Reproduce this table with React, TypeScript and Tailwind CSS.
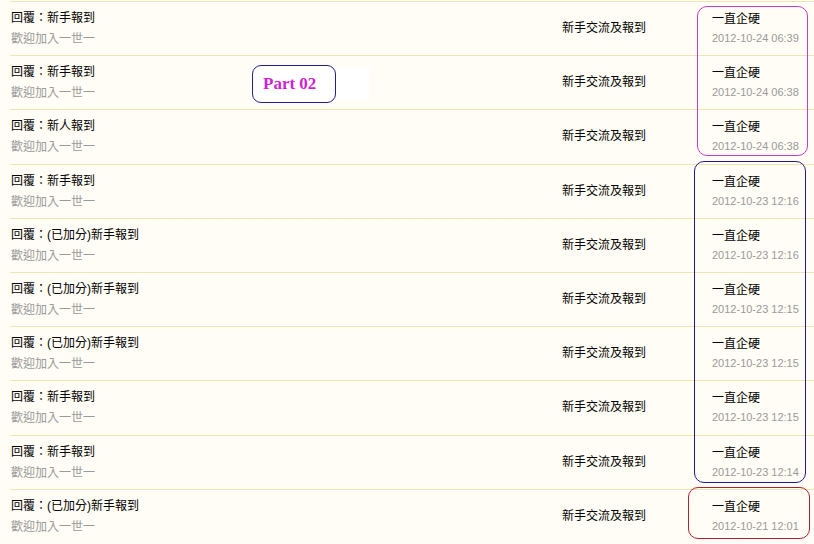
const rows = [
  { title: "回覆：新手報到", author: "一直企硬", date: "2012-10-24 06:39" },
  { title: "回覆：新手報到", author: "一直企硬", date: "2012-10-24 06:38" },
  { title: "回覆：新人報到", author: "一直企硬", date: "2012-10-24 06:38" },
  { title: "回覆：新手報到", author: "一直企硬", date: "2012-10-23 12:16" },
  { title: "回覆：(已加分)新手報到", author: "一直企硬", date: "2012-10-23 12:16" },
  { title: "回覆：(已加分)新手報到", author: "一直企硬", date: "2012-10-23 12:15" },
  { title: "回覆：(已加分)新手報到", author: "一直企硬", date: "2012-10-23 12:15" },
  { title: "回覆：新手報到", author: "一直企硬", date: "2012-10-23 12:15" },
  { title: "回覆：新手報到", author: "一直企硬", date: "2012-10-23 12:14" },
  { title: "回覆：(已加分)新手報到", author: "一直企硬", date: "2012-10-21 12:01" },
]

const cjk = "font-['Liberation_Sans','Noto_Sans_CJK_TC',sans-serif]"

export default function App() {
  return (
    <div className={`relative w-[814px] h-[544px] overflow-hidden bg-[#fffdf5] ${cjk}`}>
      <div className="pt-[1px] pl-[10px]">
        {rows.map((r, i) => (
          <div
            key={i}
            className="flex h-[54.2px] border-t border-[#f0e4b2] text-[12px] leading-[14px]"
          >
            {/* topic */}
            <div className="w-[552px] pl-[1px] pt-[9px]">
              <div className="text-black">{r.title}</div>
              <div className="mt-[7px] text-[#9a9a9a]">歡迎加入一世一</div>
            </div>
            {/* forum */}
            <div className="w-[150px] pt-[19px] text-black">新手交流及報到</div>
            {/* author / date */}
            <div className="pt-[10px]">
              <div className="text-black">{r.author}</div>
              <div className="mt-[5px] text-[11px] text-[#9a9a9a]">{r.date}</div>
            </div>
          </div>
        ))}
      </div>

      {/* annotations drawn over the list */}
      <div className="absolute left-[300px] top-[67px] w-[70px] h-[32px] bg-white" />
      <div className="absolute left-[252px] top-[65px] w-[84px] h-[38px] rounded-[9px] border border-[#1f1f8f] bg-white flex items-center pl-[10px]">
        <span className="font-['Liberation_Serif',serif] font-bold text-[17px] text-[#d21fd2]">Part 02</span>
      </div>
      <div className="absolute left-[697px] top-[6px] w-[111px] h-[150px] rounded-[10px] border border-[#c83cc8]" />
      <div className="absolute left-[694px] top-[161px] w-[112px] h-[322px] rounded-[10px] border border-[#1c1c90]" />
      <div className="absolute left-[688px] top-[487px] w-[122px] h-[52px] rounded-[10px] border border-[#b3202e]" />
    </div>
  )
}
